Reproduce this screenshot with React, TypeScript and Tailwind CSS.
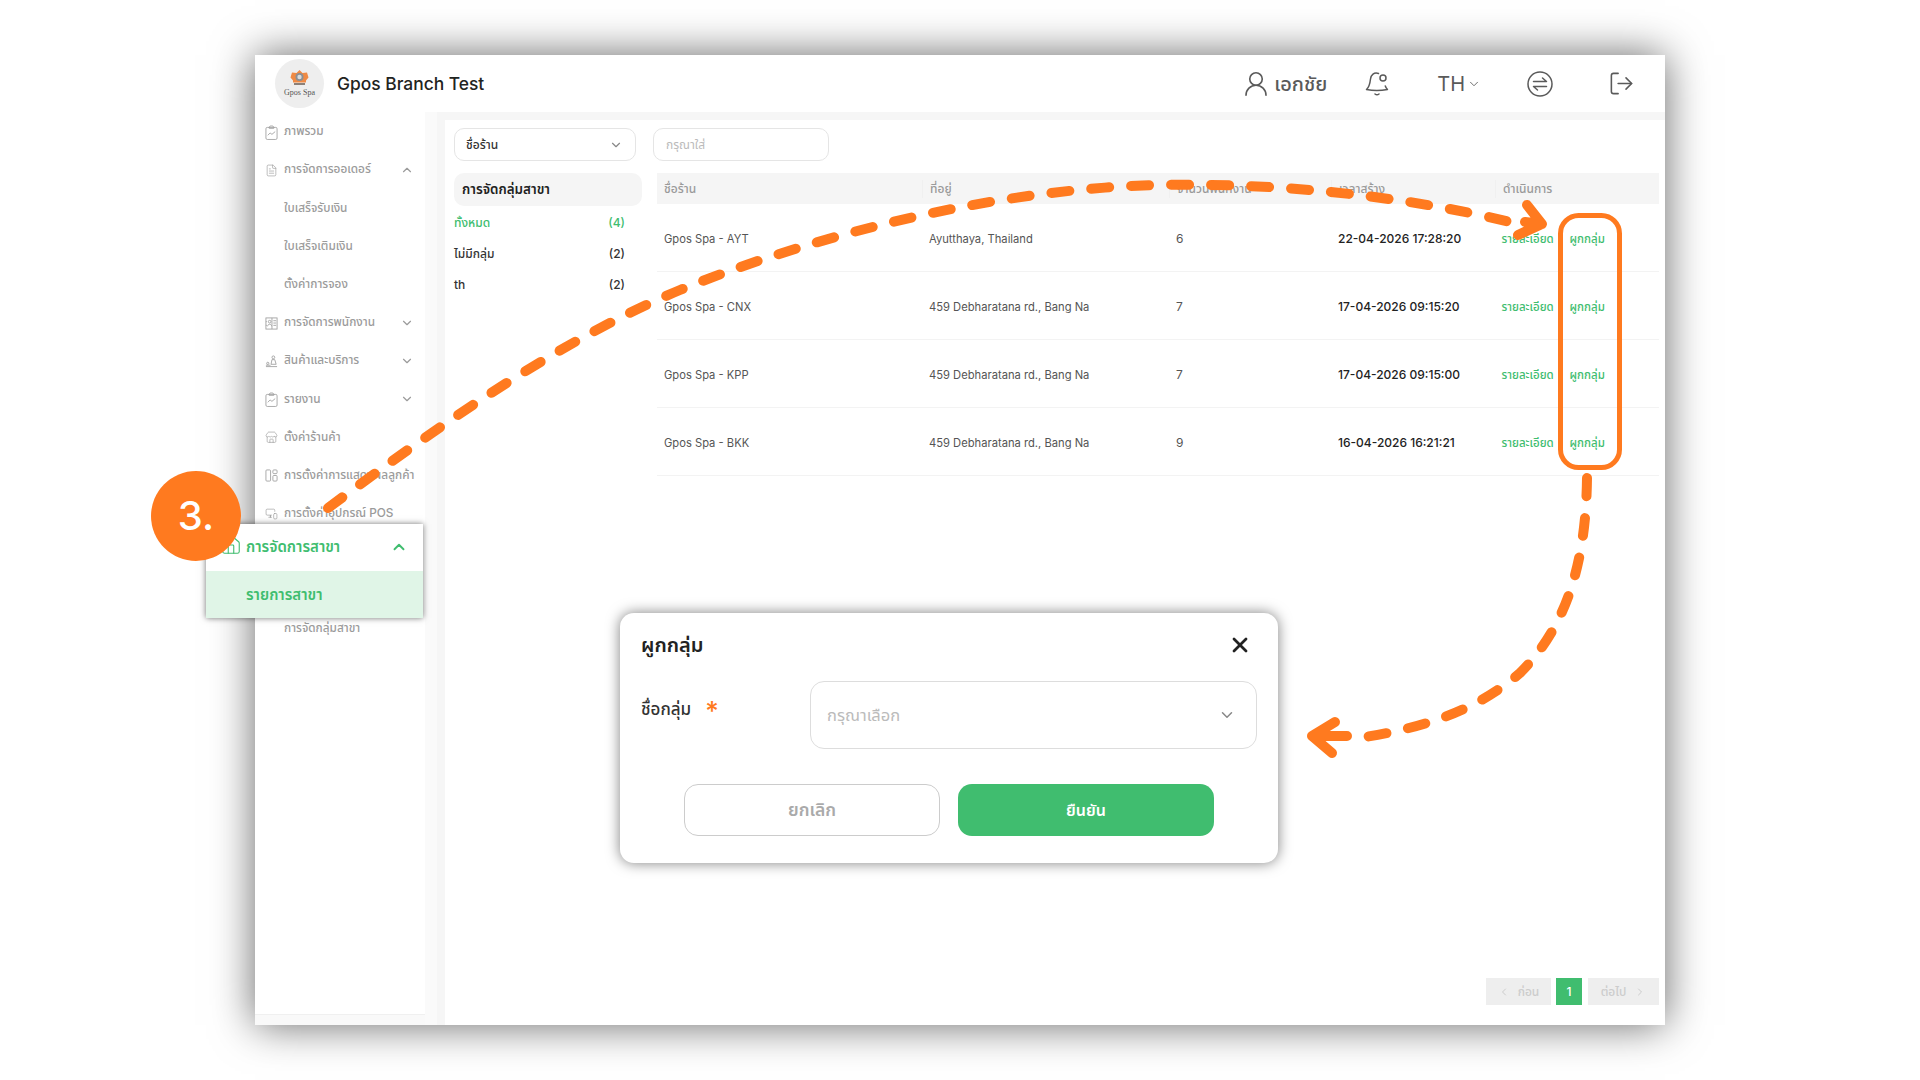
import {
  ChevronDown,
  ChevronLeft,
  ChevronRight,
  ChevronUp,
  FileText,
  House,
  LogOut,
  MonitorSmartphone,
  Store,
  UserRound,
  X,
} from 'lucide-react'
import type { ReactNode } from 'react'

const FONT = "font-['Inter','Noto_Sans','Noto_Sans_Thai',sans-serif]"

function ClipboardChart({ className }: { className?: string }) {
  return (
    <svg className={className} viewBox="0 0 14 16" fill="none" stroke="currentColor" strokeWidth="0.9">
      <rect x="1" y="2.500" width="12" height="13" rx="1.500" />
      <path d="M4.500 2.500 5.500 1h3l1 1.500v1h-5z" />
      <path d="M3 11l2.500-2.500 2 1.500L11 7" />
    </svg>
  )
}

function StaffCard({ className }: { className?: string }) {
  return (
    <svg className={className} viewBox="0 0 14 14" fill="none" stroke="currentColor" strokeWidth="0.9">
      <rect x="1" y="1" width="12" height="12" />
      <path d="M7.500 1v12M9 4h3M9 6.500h3M9 9h3M1 5h1M1 9h1" />
      <circle cx="5" cy="5" r="1.400" />
      <path d="M2.800 10c.3-1.600 1-2.200 2.200-2.200S6.900 8.400 7.200 10" />
    </svg>
  )
}

function Products({ className }: { className?: string }) {
  return (
    <svg className={className} viewBox="0 0 14 14" fill="none" stroke="currentColor" strokeWidth="0.9">
      <circle cx="9" cy="2.500" r="1.500" />
      <path d="M7.500 5h3l1.500 5H6.500z" />
      <circle cx="3" cy="9" r="1.200" />
      <path d="M1 12.500h12M1 11h5" />
    </svg>
  )
}

function Panels({ className }: { className?: string }) {
  return (
    <svg className={className} viewBox="0 0 14 14" fill="none" stroke="currentColor" strokeWidth="0.9">
      <rect x="1" y="1" width="5" height="12" rx="1" />
      <rect x="8.500" y="1" width="4.500" height="4" rx="1" />
      <rect x="8.500" y="7" width="4.500" height="6" rx="1" />
    </svg>
  )
}

function BellDot({ className }: { className?: string }) {
  return (
    <svg className={className} viewBox="0 0 24 25" fill="none" stroke="currentColor" strokeWidth="1.500" strokeLinecap="round" strokeLinejoin="round">
      <path d="M13.500 2.500C9 1 6 4 5.500 8 5 12.500 4.500 16 1.500 18.500c6 1.200 14.500 1.200 21 0-1-1-1.700-2-2.200-3.500" />
      <circle cx="18" cy="7" r="3" />
      <path d="M10 23c1.200 1 2.800 1 4 0" />
    </svg>
  )
}

function SwapCircle({ className }: { className?: string }) {
  return (
    <svg className={className} viewBox="0 0 26 26" fill="none" stroke="currentColor" strokeWidth="1.500" strokeLinecap="round" strokeLinejoin="round">
      <circle cx="13" cy="13" r="12" />
      <path d="M6.500 10.500h13l-4-3.500M19.500 15.500h-13l4 3.500" />
    </svg>
  )
}

function Logo() {
  return (
    <div className="flex flex-col items-center justify-center w-[49px] h-[49px] rounded-full bg-[#eeeeee]">
      <svg className="w-[19px] h-[16px]" viewBox="0 0 19 16">
        <path d="M9.500 0l3 3 4.500-.5 1.500 5-2.500 3v2h-13v-2L.5 7.500 2 2.500 6.500 3z" fill="#ef8a45" />
        <circle cx="9.500" cy="7" r="4" fill="#8a8f94" />
        <circle cx="9.500" cy="7" r="2.200" fill="#d8dadc" />
        <rect x="4" y="13" width="11" height="2" fill="#8b8078" />
      </svg>
      <span className="font-['Liberation_Serif',serif] text-[8px] leading-[9px] text-[#555555] mt-[2px]">Gpos Spa</span>
    </div>
  )
}

function MenuRow({
  icon,
  label,
  arrow,
}: {
  icon?: ReactNode
  label: string
  arrow?: 'up' | 'down'
}) {
  return (
    <div className="flex items-center h-[38.2px] pl-[10px] pr-[11px] text-[#9b9b9b]">
      <div className="w-[19px] shrink-0">{icon}</div>
      <span className="flex-1 text-[11.8px] font-medium whitespace-nowrap">{label}</span>
      {arrow === 'up' && <ChevronUp className="w-[14px] h-[14px]" />}
      {arrow === 'down' && <ChevronDown className="w-[14px] h-[14px]" />}
    </div>
  )
}

function Sidebar() {
  const ic = 'w-[13px] h-[15px]'
  return (
    <div className="w-[170px] h-[903px] pt-[1px] bg-white border-b border-[#f0f0f0] shrink-0">
      <MenuRow icon={<ClipboardChart className={ic} />} label="ภาพรวม" />
      <MenuRow icon={<FileText className={ic} strokeWidth={1.200} />} label="การจัดการออเดอร์" arrow="up" />
      <MenuRow label="ใบเสร็จรับเงิน" />
      <MenuRow label="ใบเสร็จเติมเงิน" />
      <MenuRow label="ตั้งค่าการจอง" />
      <MenuRow icon={<StaffCard className={ic} />} label="การจัดการพนักงาน" arrow="down" />
      <MenuRow icon={<Products className={ic} />} label="สินค้าและบริการ" arrow="down" />
      <MenuRow icon={<ClipboardChart className={ic} />} label="รายงาน" arrow="down" />
      <MenuRow icon={<Store className={ic} strokeWidth={1.200} />} label="ตั้งค่าร้านค้า" />
      <MenuRow icon={<Panels className={ic} />} label="การตั้งค่าการแสดงผลลูกค้า" />
      <MenuRow icon={<MonitorSmartphone className={ic} strokeWidth={1.200} />} label="การตั้งค่าอุปกรณ์ POS" />
      {/* the two rows here sit under the callout */}
      <div className="h-[76.4px]" />
      <MenuRow label="การจัดกลุ่มสาขา" />
    </div>
  )
}

function Header() {
  return (
    <div className="flex items-center h-[57px] pl-[20px] shrink-0 bg-white">
      <Logo />
      <span className="ml-[13px] pt-[1px] text-[17.4px] font-medium text-[#1f2421]">Gpos Branch Test</span>
      <div className="flex items-center ml-auto text-[#5a5a5a]">
        <UserRound className="w-[30px] h-[30px]" strokeWidth={1.300} />
        <span className="ml-[3px] text-[20px] font-medium">เอกชัย</span>
        <BellDot className="ml-[38px] w-[24px] h-[25px]" />
        <span className="ml-[48px] text-[20px]">TH</span>
        <ChevronDown className="ml-[2px] w-[14px] h-[14px]" strokeWidth={1.500} />
        <SwapCircle className="ml-[46px] w-[26px] h-[26px]" />
        <LogOut className="ml-[55px] mr-[30px] w-[27px] h-[27px]" strokeWidth={1.400} />
      </div>
    </div>
  )
}

const groups = [
  { name: 'ทั้งหมด', count: 4, active: true },
  { name: 'ไม่มีกลุ่ม', count: 2, active: false },
  { name: 'th', count: 2, active: false },
]

const branches = [
  { name: 'Gpos Spa - AYT', address: 'Ayutthaya, Thailand', staff: 6, created: '22-04-2026 17:28:20' },
  { name: 'Gpos Spa - CNX', address: '459 Debharatana rd., Bang Na', staff: 7, created: '17-04-2026 09:15:20' },
  { name: 'Gpos Spa - KPP', address: '459 Debharatana rd., Bang Na', staff: 7, created: '17-04-2026 09:15:00' },
  { name: 'Gpos Spa - BKK', address: '459 Debharatana rd., Bang Na', staff: 9, created: '16-04-2026 16:21:21' },
]

const COLS = 'grid grid-cols-[265px_247px_162px_164px_1fr]'

function BranchTable() {
  const heads = ['ชื่อร้าน', 'ที่อยู่', 'จำนวนพนักงาน', 'เวลาสร้าง', 'ดำเนินการ']
  return (
    <div className="flex-1">
      <div className={`${COLS} h-[31px] bg-[#f5f5f5] items-center`}>
        {heads.map((h, i) => (
          <div key={h} className={`px-[7px] text-[12px] font-medium text-[#9a9a9a] ${i > 0 ? 'border-l border-[#f0f0f0]' : ''}`}>
            {h}
          </div>
        ))}
      </div>
      {branches.map(b => (
        <div key={b.name} className={`${COLS} h-[68px] pt-[3px] items-center border-b border-[#f3f3f3] text-[11.2px] text-[#555555]`}>
          <div className="px-[7px]">{b.name}</div>
          <div className="px-[7px]">{b.address}</div>
          <div className="px-[7px] text-[12px]">{b.staff}</div>
          <div className="px-[7px] text-[12px] font-medium text-[#222222]">{b.created}</div>
          <div className="pl-[6.500px] pt-[1px] flex text-[11.500px] font-medium text-[#40bd6f] whitespace-nowrap">
            <span className="w-[68px]">รายละเอียด</span>
            <span>ผูกกลุ่ม</span>
          </div>
        </div>
      ))}
    </div>
  )
}

function Main() {
  return (
    <div className="flex-1 flex flex-col mt-[8px] ml-[8px] pl-[9px] pr-[6px] pt-[8px] pb-[20px] bg-white">
      <div className="flex gap-[17px] h-[33px]">
        <div className="flex items-center justify-between w-[182px] pl-[11px] pr-[12px] rounded-[10px] border border-[#e5e5e5] text-[12px] font-medium text-[#333333]">
          ชื่อร้าน
          <ChevronDown className="w-[14px] h-[14px] text-[#888888]" />
        </div>
        <div className="flex items-center w-[176px] px-[12px] rounded-[10px] border border-[#e5e5e5] text-[12px] text-[#bbbbbb]">
          กรุณาใส่
        </div>
      </div>
      <div className="flex gap-[15px] mt-[12px] flex-1">
        <div className="w-[188px]">
          <div className="flex items-center h-[33px] px-[8px] rounded-[10px] bg-[#f5f5f5] text-[13.400px] font-semibold text-[#222222]">
            การจัดกลุ่มสาขา
          </div>
          <div className="mt-[1px]">
            {groups.map(g => (
              <div key={g.name} className={`flex items-center justify-between h-[31px] pr-[17px] text-[12px] font-medium ${g.active ? 'text-[#40bd6f]' : 'text-[#333333]'}`}>
                <span>{g.name}</span>
                <span>({g.count})</span>
              </div>
            ))}
          </div>
        </div>
        <BranchTable />
      </div>
      <div className="flex justify-end items-stretch gap-[5px] h-[27px] text-[12px] font-medium text-[#cccccc]">
        <div className="flex items-center justify-center gap-[8px] w-[65px] bg-[#eeeeee]">
          <ChevronLeft className="w-[12px] h-[12px]" />
          ก่อน
        </div>
        <div className="flex items-center justify-center w-[26px] bg-[#40bd6f] text-white">1</div>
        <div className="flex items-center justify-center gap-[8px] w-[71px] ml-[1px] bg-[#eeeeee]">
          ต่อไป
          <ChevronRight className="w-[12px] h-[12px]" />
        </div>
      </div>
    </div>
  )
}

function BranchMenuCallout() {
  return (
    <div className="absolute left-[206px] top-[524px] w-[217px] h-[94px] bg-white shadow-[0_0_6px_rgba(0,0,0,0.55)]">
      <div className="flex items-center h-[47px] pl-[40px] pr-[15px] text-[#40bd6f]">
        <span className="flex-1 text-[15px] font-semibold">การจัดการสาขา</span>
        <ChevronUp className="w-[18px] h-[18px] -translate-y-[1px]" strokeWidth={2.500} />
      </div>
      <div className="flex items-center h-[47px] pl-[40px] pt-[1px] bg-[#e0f5e7] text-[15px] font-semibold text-[#40bd6f]">
        รายการสาขา
      </div>
      <House className="absolute left-[14px] top-[10px] w-[22px] h-[22px] text-[#40bd6f]" strokeWidth={1.200} />
    </div>
  )
}

function BindGroupModal() {
  return (
    <div className="absolute left-[620px] top-[613px] w-[658px] h-[250px] pl-[21px] pr-[21px] pt-[19px] rounded-[14px] bg-white shadow-[0_0_14px_rgba(0,0,0,0.5)]">
      <div className="flex items-center justify-between h-[26px]">
        <span className="text-[20px] font-semibold text-[#222222]">ผูกกลุ่ม</span>
        <X className="w-[24px] h-[24px] mr-[5px] text-[#222222]" strokeWidth={2.800} />
      </div>
      <div className="flex mt-[23px]">
        <div className="flex w-[169px] pt-[16px] text-[17px] font-medium text-[#333333]">
          ชื่อกลุ่ม
          <span className="ml-[14px] mt-[1px] text-[#ff7a1f] text-[26px] leading-[26px]">*</span>
        </div>
        <div className="flex items-center justify-between flex-1 h-[68px] pl-[16px] pr-[20px] rounded-[14px] border border-[#dddddd] text-[16.500px] text-[#bbbbbb]">
          กรุณาเลือก
          <ChevronDown className="w-[18px] h-[18px] text-[#888888]" />
        </div>
      </div>
      <div className="flex justify-start gap-[18px] ml-[43px] mt-[35px] font-semibold">
        <div className="flex items-center justify-center w-[256px] h-[52px] rounded-[14px] border border-[#cccccc] text-[17.500px] text-[#aaaaaa]">ยกเลิก</div>
        <div className="flex items-center justify-center w-[256px] h-[52px] rounded-[14px] bg-[#40bd6f] text-[16px] text-white">ยืนยัน</div>
      </div>
    </div>
  )
}

function Arrows() {
  return (
    <svg className="absolute inset-0 w-[1920px] h-[1080px] pointer-events-none" viewBox="0 0 1920 1080" fill="none" stroke="#ff7a1f" strokeLinecap="round" strokeLinejoin="round">
      <path d="M328 508 C440 425 560 340 680 290 C790 245 960 195 1130 186 C1260 180 1400 195 1510 222" strokeWidth="10" strokeDasharray="18 22" />
      <path d="M1527 205 L1542 224 L1518 235 M1525 222 L1542 224" strokeWidth="10" />
      <rect x="1560.500" y="215.500" width="59" height="252" rx="18" strokeWidth="5" />
      <path d="M1587 478 C1586 560 1568 625 1520 673 C1485 703 1440 725 1365 737" strokeWidth="10" strokeDasharray="18 22" />
      <path d="M1335 722 L1312 736 L1332 753 M1312 736 L1347 736" strokeWidth="10" />
    </svg>
  )
}

export default function App() {
  return (
    <div className={`${FONT} relative w-[1920px] h-[1080px] overflow-hidden bg-white pl-[255px] pt-[55px]`}>
      <div className="flex flex-col w-[1410px] h-[970px] bg-[#f9f9f9] shadow-[0_0_40px_rgba(0,0,0,0.6)]">
        <Header />
        <div className="flex flex-1">
          <Sidebar />
          <div className="flex flex-1 bg-[#f6f6f6]">
            <div className="w-[12px] shrink-0 bg-[#fafafa]" />
            <Main />
          </div>
        </div>
      </div>
      <BranchMenuCallout />
      <div className="absolute left-[151px] top-[471px] w-[90px] h-[90px] flex items-center justify-center rounded-full bg-[#ff7a1f] text-white text-[40px] font-medium">
        3.
      </div>
      <BindGroupModal />
      <Arrows />
    </div>
  )
}
